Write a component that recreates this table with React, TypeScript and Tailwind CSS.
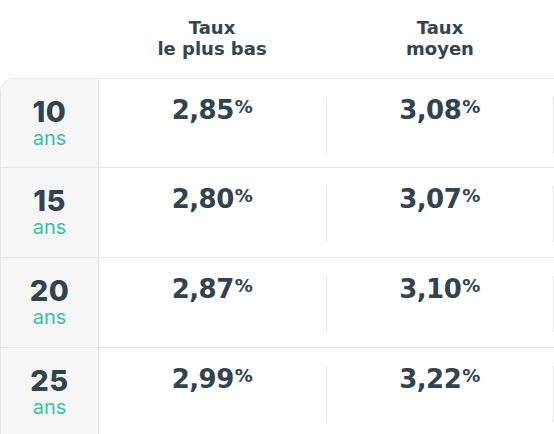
import React from "react";

const rows = [
  { y: "10", a: "2,85", b: "3,08" },
  { y: "15", a: "2,80", b: "3,07" },
  { y: "20", a: "2,87", b: "3,10" },
  { y: "25", a: "2,99", b: "3,22" },
];

const wide = { fontFamily: "'DejaVu Sans', Inter, sans-serif" };

function Rate({ v }: { v: string }) {
  return (
    <div className="flex-1 pt-[18px] pb-[15px]">
      <div className="h-[56px] border-r border-[#e6e6e6] flex justify-center items-start">
        <div className="flex items-start text-[#33434e] font-bold -mt-[2px]" style={wide}>
          <span className="text-[26px] leading-[30px] tracking-[-0.5px]">{v}</span>
          <span className="text-[18px] leading-[22px] ml-[1px] mt-[1px]">%</span>
        </div>
      </div>
    </div>
  );
}

export default function App() {
  return (
    <div
      className="w-[554px] h-[434px] bg-white overflow-hidden"
      style={{ fontFamily: "Inter, 'Noto Sans', sans-serif" }}
    >
      <div
        className="flex h-[78px] text-[#34454f] font-bold text-[18px] leading-[21px] text-center"
        style={wide}
      >
        <div className="w-[98px]" />
        <div className="flex-1 pt-[17px]">
          Taux
          <br />
          le plus bas
        </div>
        <div className="flex-1 pt-[17px]">
          Taux
          <br />
          moyen
        </div>
      </div>
      <div className="border-t border-l border-[#e6e6e6] rounded-tl-[14px] overflow-hidden">
        {rows.map((r, i) => (
          <div
            key={r.y}
            className={
              "flex " + (i > 0 ? "h-[90px] border-t border-[#e6e6e6]" : "h-[88px]")
            }
          >
            <div className="w-[98px] shrink-0 bg-[#f6f6f6] border-r border-[#e6e6e6] flex flex-col items-center justify-center pb-[1px]">
              <span className="text-[29px] leading-[30px] font-extrabold text-[#33434e] tracking-[0.5px]">
                {r.y}
              </span>
              <span className="text-[20px] leading-[22px] text-[#34c4a4]">ans</span>
            </div>
            <Rate v={r.a} />
            <Rate v={r.b} />
          </div>
        ))}
      </div>
    </div>
  );
}
